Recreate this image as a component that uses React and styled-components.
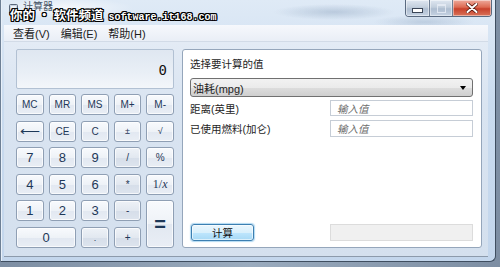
import styled, { createGlobalStyle } from "styled-components";

const GlobalStyle = createGlobalStyle`
  html, body {
    margin: 0;
    padding: 0;
    background: #8596aa;
  }
  body {
    font-family: "Liberation Sans", "Noto Sans CJK SC", sans-serif;
  }
`;

const CJK = `"Liberation Sans", "Noto Sans CJK SC", sans-serif`;

// window frame
const Page = styled.div`
  width: 500px;
  height: 267px;
  overflow: hidden;
  background: linear-gradient(90deg, #7d8ea3, #9aabbe 50%, #7d8ea3);
`;

const Window = styled.div`
  position: relative;
  width: 496px;
  height: 262px;
  box-sizing: border-box;
  display: flex;
  flex-direction: column;
  padding: 0 7px 4px 3px;
  background: linear-gradient(180deg, #dfeaf6 0%, #c9dbef 40%, #c3d6ec 100%);
  border-right: 1px solid #3f4e60;
  border-bottom: 1px solid #3f4e60;
  border-left: 1px solid #6e8095;
  border-bottom-right-radius: 6px;
  box-shadow: inset 1px 0 0 #e8f0f9;
`;

const TitleBar = styled.div`
  height: 26px;
  display: flex;
  align-items: flex-start;
  background:
    radial-gradient(ellipse 60px 8px at 330px 12px, rgba(120, 145, 175, 0.35), transparent),
    radial-gradient(ellipse 50px 7px at 420px 22px, rgba(120, 145, 175, 0.3), transparent),
    radial-gradient(ellipse 70px 10px at 60px 8px, rgba(255, 255, 255, 0.7), transparent);
`;

const AppIcon = styled.svg`
  margin: 4px 0 0 5px;
  flex: none;
`;

const AppTitle = styled.span`
  margin: 1px 0 0 5px;
  font-family: ${CJK};
  font-size: 10px;
  line-height: 11px;
  color: #4b5868;
`;

const Watermark = styled.div`
  position: absolute;
  left: 9px;
  top: 7px;
  display: flex;
  align-items: baseline;
  gap: 3px;
  color: #fff;
  font-weight: bold;
  text-shadow:
    1px 0 0 #000, -1px 0 0 #000, 0 1px 0 #000, 0 -1px 0 #000,
    1px 1px 0 #000, -1px -1px 0 #000, 1px -1px 0 #000, -1px 1px 0 #000;
`;

const MarkCN = styled.span`
  font-family: "Noto Sans CJK SC", sans-serif;
  font-size: 12.5px;
  line-height: 15px;
`;

const MarkEN = styled.span`
  font-family: "Liberation Mono", monospace;
  font-size: 10px;
  margin-left: 2px;
`;

const Caption = styled.div`
  margin-left: auto;
  margin-right: -4px;
  display: flex;
  height: 16px;
  border: 1px solid #5a6a80;
  border-top: none;
  border-radius: 0 0 4px 4px;
  overflow: hidden;
`;

const CapButton = styled.div`
  width: ${(p) => p.$w}px;
  display: flex;
  align-items: center;
  justify-content: center;
  background: ${(p) =>
    p.$close
      ? "linear-gradient(180deg, #eeaa9c 0%, #dd6a52 45%, #c8412b 55%, #d9735a 100%)"
      : "linear-gradient(180deg, #dfe7f1 0%, #c3cfdd 45%, #aebdd0 55%, #c6d3e3 100%)"};
  border-left: ${(p) => (p.$first ? "none" : "1px solid #6f7f94")};
  box-shadow: inset 0 0 0 1px rgba(255, 255, 255, 0.45);
`;

const MinGlyph = styled.div`
  width: 9px;
  height: 3px;
  background: #fff;
  border: 1px solid #3b4657;
  margin-top: 4px;
`;

const MaxGlyph = styled.div`
  width: 7px;
  height: 6px;
  border: 1px solid #e8eef6;
  border-top-width: 2px;
  opacity: 0.8;
`;

const MenuBar = styled.div`
  height: 16px;
  display: flex;
  align-items: center;
  gap: 11px;
  padding-left: 9px;
  background: linear-gradient(180deg, #f6f8fc 0%, #e9eef6 100%);
  border-bottom: 1px solid #d2dbe7;
  font-family: ${CJK};
  font-size: 11px;
  color: #1c1c1c;
`;

const Client = styled.div`
  flex: 1;
  display: flex;
  gap: 8px;
  padding: 7px 6px 8px 12px;
  background: linear-gradient(180deg, #e3ebf5 0%, #d9e4f1 30%, #d4e0ee 100%);
  border-bottom: 1px solid #8c9aab;
`;

// calculator side
const CalcPanel = styled.div`
  width: 158px;
  display: flex;
  flex-direction: column;
  gap: 5px;
`;

const Display = styled.div`
  height: 40px;
  box-sizing: border-box;
  display: flex;
  align-items: center;
  justify-content: flex-end;
  padding: 2px 6px 0 0;
  border: 1px solid #b2c1d3;
  border-radius: 2px;
  background: linear-gradient(180deg, #dfe7f1 0%, #e9eff6 60%, #f3f6fa 100%);
  font-family: "DejaVu Sans Mono", monospace;
  font-size: 14px;
  color: #111;
`;

const Keys = styled.div`
  display: grid;
  grid-template-columns: repeat(5, 1fr);
  grid-auto-rows: 21px;
  column-gap: 5px;
  row-gap: 5.6px;
`;

const Key = styled.div`
  grid-column: span ${(p) => p.$cols || 1};
  grid-row: span ${(p) => p.$rows || 1};
  display: flex;
  align-items: center;
  justify-content: center;
  border: 1px solid #8f9fb4;
  border-radius: 3px;
  background: ${(p) =>
    p.$op
      ? "linear-gradient(180deg, #eef2f7 0%, #e2e8f0 50%, #d6dee9 51%, #dde4ee 100%)"
      : "linear-gradient(180deg, #f8fafd 0%, #eef2f7 50%, #e2e8f1 51%, #e9eef5 100%)"};
  box-shadow: inset 0 0 0 1px rgba(255, 255, 255, 0.7);
  color: #1e3858;
  font-family: ${(p) => (p.$serif ? `"Liberation Serif", serif` : `"Liberation Sans", sans-serif`)};
  font-size: ${(p) => p.$size || 13}px;
  font-weight: ${(p) => (p.$bold ? "bold" : "normal")};
`;

// unit converter side
const ConvPanel = styled.div`
  flex: 1;
  display: flex;
  flex-direction: column;
  padding: 7px 8px 6px 7px;
  background: #fff;
  border: 1px solid #95a6bb;
  border-radius: 3px;
  font-family: ${CJK};
  font-size: 10.5px;
  color: #1e1e1e;
`;

const Label = styled.div`
  line-height: 15px;
  margin-bottom: 6px;
`;

const Select = styled.div`
  height: 19px;
  box-sizing: border-box;
  display: flex;
  align-items: center;
  justify-content: space-between;
  padding: 0 6px 0 2px;
  border: 1px solid #707070;
  border-radius: 3px;
  background: linear-gradient(180deg, #f2f2f2 0%, #ebebeb 50%, #dddddd 51%, #cfcfcf 100%);
  font-size: 11px;
`;

const Arrow = styled.span`
  width: 0;
  height: 0;
  border-left: 3.5px solid transparent;
  border-right: 3.5px solid transparent;
  border-top: 4px solid #000;
`;

const Row = styled.div`
  display: flex;
  align-items: center;
  justify-content: space-between;
  margin-top: ${(p) => p.$top}px;
`;

const Input = styled.div`
  width: 143px;
  height: ${(p) => p.$h || 16}px;
  box-sizing: border-box;
  display: flex;
  align-items: center;
  padding-left: 6px;
  border: 1px solid ${(p) => (p.$readonly ? "#dcdcdc" : "#c6cdd6")};
  background: ${(p) => (p.$readonly ? "#f0f0f0" : "#fff")};
  color: #6d6d6d;
  font-style: italic;
`;

const Spacer = styled.div`
  flex: 1;
`;

const CalcButton = styled.div`
  width: 63px;
  height: 17px;
  margin-left: 1px;
  box-sizing: border-box;
  display: flex;
  align-items: center;
  justify-content: center;
  border: 1px solid #3c7fb1;
  border-radius: 3px;
  background: linear-gradient(180deg, #eaf6fd 0%, #d9f0fc 50%, #bee6fd 51%, #a7d9f5 100%);
  box-shadow: 0 0 1px 1px rgba(100, 180, 230, 0.5), inset 0 0 0 1px rgba(255, 255, 255, 0.6);
  font-size: 10.5px;
  color: #111;
`;

const keys = [
  { t: "MC", s: 10 }, { t: "MR", s: 10 }, { t: "MS", s: 10 }, { t: "M+", s: 10 }, { t: "M-", s: 10 },
  { t: "⟵", s: 14 }, { t: "CE", s: 10 }, { t: "C", s: 10 }, { t: "±", s: 9 }, { t: "√", s: 9 },
  { t: "7" }, { t: "8" }, { t: "9" }, { t: "/", s: 10, op: true }, { t: "%", s: 10 },
  { t: "4" }, { t: "5" }, { t: "6" }, { t: "*", s: 10, op: true }, { t: "1/x", s: 12, serif: true },
  { t: "1" }, { t: "2" }, { t: "3" }, { t: "-", s: 10, op: true }, { t: "=", s: 20, rows: 2, bold: true },
  { t: "0", cols: 2 }, { t: ".", s: 9, op: true }, { t: "+", s: 10, op: true },
];

export default function App() {
  return (
    <Page>
      <GlobalStyle />
      <Window>
        <TitleBar>
          <AppIcon width="9" height="11" viewBox="0 0 9 11">
            <rect x="0.5" y="0.5" width="8" height="10" rx="1" fill="#c9d4e2" stroke="#59677a" />
            <rect x="2" y="2" width="5" height="2" fill="#eef4fb" />
          </AppIcon>
          <AppTitle>计算器</AppTitle>
          <Caption>
            <CapButton $w={23} $first>
              <MinGlyph />
            </CapButton>
            <CapButton $w={22}>
              <MaxGlyph />
            </CapButton>
            <CapButton $w={38} $close>
              <svg width="12" height="10" viewBox="0 0 12 10">
                <path
                  d="M1.5 1 L10.5 9 M10.5 1 L1.5 9"
                  stroke="#5a1a10"
                  strokeWidth="3.6"
                  strokeLinecap="round"
                />
                <path
                  d="M1.5 1 L10.5 9 M10.5 1 L1.5 9"
                  stroke="#fff"
                  strokeWidth="2"
                  strokeLinecap="round"
                />
              </svg>
            </CapButton>
          </Caption>
        </TitleBar>
        <Watermark>
          <MarkCN>你的</MarkCN>
          <MarkCN>·</MarkCN>
          <MarkCN>软件频道</MarkCN>
          <MarkEN>software.it168.com</MarkEN>
        </Watermark>

        <MenuBar>
          <span>查看(V)</span>
          <span>编辑(E)</span>
          <span>帮助(H)</span>
        </MenuBar>

        <Client>
          <CalcPanel>
            <Display>0</Display>
            <Keys>
              {keys.map((k) => (
                <Key
                  key={k.t}
                  $size={k.s}
                  $cols={k.cols}
                  $rows={k.rows}
                  $op={k.op}
                  $bold={k.bold}
                  $serif={k.serif}
                >
                  {k.t === "1/x" ? (
                    <span>
                      1/<i>x</i>
                    </span>
                  ) : (
                    k.t
                  )}
                </Key>
              ))}
            </Keys>
          </CalcPanel>

          <ConvPanel>
            <Label>选择要计算的值</Label>
            <Select>
              <span>油耗(mpg)</span>
              <Arrow />
            </Select>
            <Row $top={3}>
              <span>距离(英里)</span>
              <Input>输入值</Input>
            </Row>
            <Row $top={4}>
              <span>已使用燃料(加仑)</span>
              <Input $h={17}>输入值</Input>
            </Row>
            <Spacer />
            <Row $top={0}>
              <CalcButton>计算</CalcButton>
              <Input $h={17} $readonly />
            </Row>
          </ConvPanel>
        </Client>
      </Window>
    </Page>
  );
}
